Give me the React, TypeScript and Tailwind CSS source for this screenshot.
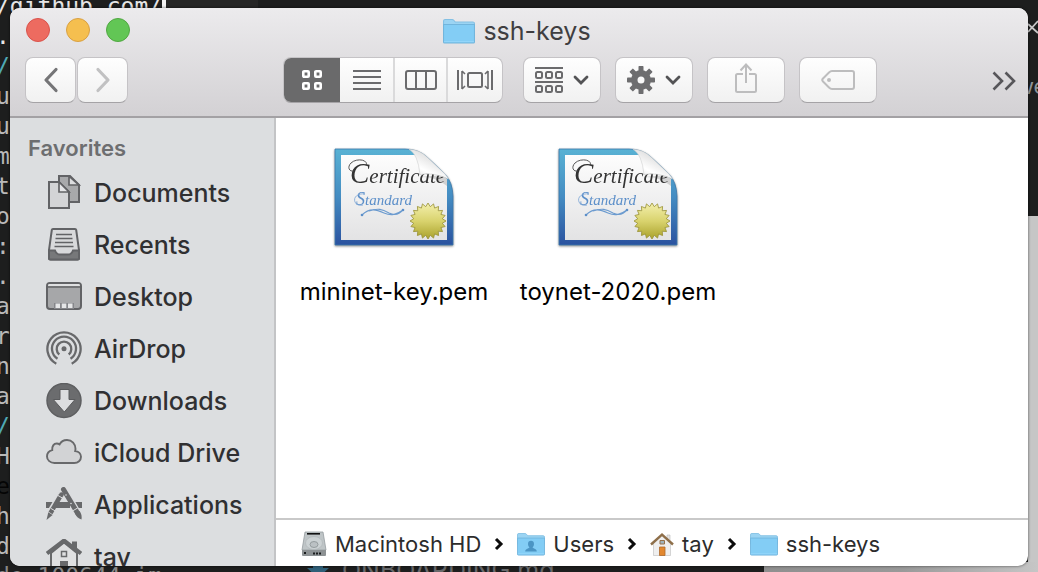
import type { ReactNode } from "react";

const terminalLines = [
  { text: "/github.com/", tone: "text-[#e6e6e6]" },
  { text: ".", tone: "text-[#e6e6e6]" },
  { text: "/", tone: "text-[#4fa9b5]" },
  { text: "u", tone: "text-[#b9b9b9]" },
  { text: "u", tone: "text-[#b9b9b9]" },
  { text: "m", tone: "text-[#b9b9b9]" },
  { text: "t", tone: "text-[#b9b9b9]" },
  { text: "o", tone: "text-[#b9b9b9]" },
  { text: ":", tone: "text-[#b9b9b9]" },
  { text: ".", tone: "text-[#b9b9b9]" },
  { text: "a", tone: "text-[#b9b9b9]" },
  { text: "r", tone: "text-[#b9b9b9]" },
  { text: "n", tone: "text-[#b9b9b9]" },
  { text: "a", tone: "text-[#b9b9b9]" },
  { text: "/", tone: "text-[#4fa9b5]" },
  { text: "H", tone: "text-[#b9b9b9]" },
  { text: "e", tone: "text-[#050505]" },
  { text: "h", tone: "text-[#b9b9b9]" },
  { text: "d", tone: "text-[#b9b9b9]" },
  { text: "de 100644 im", tone: "text-[#8a8a8a]" },
];

function Backdrop() {
  return (
    <div aria-hidden="true" className="absolute inset-0 overflow-hidden bg-[#1d1e1e]">
      <div className="absolute top-0 left-[166px] h-2 w-[92px] bg-[#262626]" />
      <div className="absolute top-0 left-[162px] h-2 w-1 bg-[#f2f2f2]" />
      <div className="absolute right-0 bottom-0 h-[356px] w-[10px] bg-[#c6c6c6]" />
      <div className="absolute right-0 bottom-0 left-[764px] h-[10px] bg-gradient-to-r from-[#8f8f8f] via-[#999999] to-[#c6c6c6]" />
      <div className="absolute -top-[9px] -left-1 font-['DejaVu_Sans_Mono',monospace] text-[23px] leading-[30px]">
        {terminalLines.map((line, i) => (
          <pre key={i} className={`font-[inherit] ${line.tone}`}>
            {line.text}
          </pre>
        ))}
      </div>
      <div className="absolute top-[558px] left-[306px] flex items-start gap-3 text-[25px] leading-6 text-[#68696b]">
        <svg width="24" height="20" viewBox="0 0 24 20" fill="#2f5f78">
          <path d="M7 0h10v10h6L12 20 1 10h6z" />
        </svg>
        <span>ONBOARDING.md</span>
      </div>
      <svg className="absolute top-5 right-0" width="10" height="16" viewBox="0 0 10 16" fill="none" stroke="#c8c8c8" strokeWidth="1.8">
        <path d="M0 4l10 9M0 12L10 1" />
      </svg>
      <span className="absolute top-[74px] left-[1016px] text-[22px] leading-6 text-[#8e9499]">we</span>
    </div>
  );
}

function Folder({ className, person }: { className: string; person?: boolean }) {
  return (
    <svg className={className} viewBox="0 0 30 25" preserveAspectRatio="none">
      <path d="M.5 2q0-1.500 1.500-1.500h6.500q1 0 1.600.8L11.500 3H28q1.500 0 1.500 1.500V12H.5z" fill="#9bd4f3" stroke="#83c0e4" />
      <path d="M.5 5.500h29V23q0 1-1 1h-27q-1 0-1-1z" fill="#83cdf5" stroke="#72b5dc" />
      <path d="M1 22.500h28" stroke="#93d6fa" />
      {person && <path d="M15 8.500c2 0 3.200 1.400 3.200 3.400 0 1.600-.7 2.800-1.500 3.500.2 1.500 4.500 1.500 4.500 4.600H8.800c0-3.100 4.300-3.100 4.500-4.600-.8-.7-1.500-1.900-1.500-3.500 0-2 1.200-3.400 3.200-3.400z" fill="#4c95c4" />}
    </svg>
  );
}

function ToolButton({ label, children, className = "", disabled }: { label: string; children: ReactNode; className?: string; disabled?: boolean }) {
  return (
    <button
      type="button"
      aria-label={label}
      disabled={disabled}
      className={`flex h-[46px] items-center justify-center rounded-lg border border-[#c5c3c6] border-b-[#a5a3a6] bg-gradient-to-b from-[#fefefe] to-[#f1f1f1] ${className}`}
    >
      {children}
    </button>
  );
}

function Caret() {
  return (
    <svg width="16" height="10" viewBox="0 0 16 10" fill="none" stroke="#535355" strokeWidth="2.800" strokeLinecap="round">
      <path d="M2 2l6 6 6-6" />
    </svg>
  );
}

function Gear() {
  return (
    <svg width="28" height="28" viewBox="0 0 28 28">
      <g fill="#6d6d6f">
        {[0, 45, 90, 135].map((a) => (
          <rect key={a} x="11.500" y="0" width="5" height="28" rx=".8" transform={`rotate(${a} 14 14)`} />
        ))}
        <circle cx="14" cy="14" r="10" />
      </g>
      <circle cx="14" cy="14" r="3.500" fill="#f8f8f8" />
    </svg>
  );
}

const viewModes = [
  {
    label: "Icon view",
    width: "w-14",
    icon: (
      <svg width="22" height="22" viewBox="0 0 22 22" fill="none" stroke="#fff" strokeWidth="2.600">
        <rect x="2.300" y="2.300" width="5.400" height="5.400" rx=".8" />
        <rect x="14.300" y="2.300" width="5.400" height="5.400" rx=".8" />
        <rect x="2.300" y="14.300" width="5.400" height="5.400" rx=".8" />
        <rect x="14.300" y="14.300" width="5.400" height="5.400" rx=".8" />
      </svg>
    ),
  },
  {
    label: "List view",
    width: "w-[53px]",
    icon: (
      <svg width="28" height="20" viewBox="0 0 28 20" stroke="#6b6b6d" strokeWidth="2">
        <path d="M0 1h28M0 7h28M0 13h28M0 19h28" />
      </svg>
    ),
  },
  {
    label: "Column view",
    width: "w-[53px]",
    icon: (
      <svg width="32" height="20" viewBox="0 0 32 20" fill="none" stroke="#6b6b6d" strokeWidth="2">
        <rect x="1" y="1" width="30" height="18" rx="2" />
        <path d="M11 1v18M21 1v18" />
      </svg>
    ),
  },
  {
    label: "Gallery view",
    width: "w-14",
    icon: (
      <svg width="36" height="20" viewBox="0 0 36 20" fill="none" stroke="#6b6b6d" strokeWidth="2">
        <path d="M1 0v20M35 0v20" />
        <path d="M5 1v18M31 1v18M5 1l3 3M5 19l3-3M31 1l-3 3M31 19l-3-3" strokeWidth="1.600" />
        <rect x="11" y="3" width="14" height="14" rx="1.500" />
      </svg>
    ),
  },
];

function Toolbar() {
  return (
    <header className="h-[110px] shrink-0 border-b-2 border-[#a3a1a4] bg-gradient-to-b from-[#ecebed] to-[#d3d1d4]">
      <div className="grid h-11 grid-cols-[1fr_auto_1fr] items-center">
        <div className="flex gap-4 pl-4">
          <button type="button" aria-label="Close" className="size-6 rounded-full border border-[#d9534c] bg-[#ed6b60]" />
          <button type="button" aria-label="Minimize" className="size-6 rounded-full border border-[#d8a044] bg-[#f5bf4f]" />
          <button type="button" aria-label="Zoom" className="size-6 rounded-full border border-[#51a742] bg-[#62c655]" />
        </div>
        <h1 className="flex items-center gap-2 pt-0.5 pr-1 text-[25px] leading-8 text-[#3f3e41]">
          <Folder className="h-[25px] w-8" />
          ssh-keys
        </h1>
      </div>
      <div className="mt-[5px] flex items-center pr-3 pl-[15px]">
        <div className="flex gap-px">
          <ToolButton label="Back" className="w-[51px]">
            <svg width="16" height="26" viewBox="0 0 16 26" fill="none" stroke="#757577" strokeWidth="3.200" strokeLinecap="round" strokeLinejoin="round">
              <path d="M13 2.500L3 13l10 10.500" />
            </svg>
          </ToolButton>
          <ToolButton label="Forward" className="w-[51px]" disabled>
            <svg width="16" height="26" viewBox="0 0 16 26" fill="none" stroke="#c1c1c2" strokeWidth="3.200" strokeLinecap="round" strokeLinejoin="round">
              <path d="M3 2.500L13 13 3 23.500" />
            </svg>
          </ToolButton>
        </div>
        <div className="ml-[155px] flex h-[46px] overflow-hidden rounded-lg border border-[#c5c3c6] border-b-[#a5a3a6] bg-gradient-to-b from-[#fefefe] to-[#f1f1f1]">
          {viewModes.map((mode, i) => (
            <button
              key={mode.label}
              type="button"
              aria-label={mode.label}
              aria-pressed={i === 0}
              className={`flex items-center justify-center ${mode.width} ${i === 0 ? "bg-[#6a6a6b]" : ""} ${i > 1 ? "border-l-2 border-[#dadadb]" : ""}`}
            >
              {mode.icon}
            </button>
          ))}
        </div>
        <div className="ml-5 flex gap-[14px]">
          <ToolButton label="Group items" className="w-[78px] gap-[10px]">
            <svg width="28" height="26" viewBox="0 0 28 26" fill="none" stroke="#6b6b6d" strokeWidth="2">
              <path d="M0 1h28M0 15h28" />
              {[1, 11, 21].map((x) => (
                <g key={x}>
                  <rect x={x} y="5" width="6" height="6" rx="1.500" />
                  <rect x={x} y="19" width="6" height="6" rx="1.500" />
                </g>
              ))}
            </svg>
            <Caret />
          </ToolButton>
          <ToolButton label="Actions" className="w-[78px] gap-[10px]">
            <Gear />
            <Caret />
          </ToolButton>
          <ToolButton label="Share" className="w-[78px] pb-1" disabled>
            <svg width="22" height="30" viewBox="0 0 22 30" fill="none" stroke="#bdbdbe" strokeWidth="2">
              <path d="M8 11H2.500Q1 11 1 12.500v15Q1 29 2.500 29h17q1.500 0 1.500-1.500v-15Q21 11 19.500 11H14M11 20V2M5.500 7.500L11 1.500l5.500 6" />
            </svg>
          </ToolButton>
          <ToolButton label="Edit tags" className="w-[78px]" disabled>
            <svg width="34" height="20" viewBox="0 0 34 20" fill="none" stroke="#bdbdbe" strokeWidth="2">
              <path d="M11 1h20q2 0 2 2v14q0 2-2 2H11Q9.500 19 8 17.500l-6-6q-1.500-1.500 0-3l6-6Q9.500 1 11 1z" />
              <circle cx="8" cy="10" r="2" fill="#bdbdbe" stroke="none" />
            </svg>
          </ToolButton>
        </div>
        <button type="button" aria-label="More toolbar items" className="ml-auto pt-0.5">
          <svg width="24" height="20" viewBox="0 0 24 20" fill="none" stroke="#57565a" strokeWidth="2.600">
            <path d="M1.500 1.500L10 10l-8.500 8.500M13.500 1.500L22 10l-8.500 8.500" />
          </svg>
        </button>
      </div>
    </header>
  );
}

const favorites = [
  {
    name: "Documents",
    icon: (
      <g stroke="#626366" strokeWidth="2" strokeLinejoin="miter">
        <path d="M13 1h11l9 9v17H13z" fill="#a8a9ab" />
        <path d="M23 1v9h10z" fill="#dcdddf" strokeWidth="1.700" />
        <path d="M3 7h10l10 10v16H3z" fill="#d3d4d6" />
        <path d="M13 7v10h10z" fill="#e4e5e7" strokeWidth="1.700" />
      </g>
    ),
  },
  {
    name: "Recents",
    icon: (
      <g stroke="#626366" strokeWidth="2">
        <path d="M7 2h22q1 0 1.200 1L33 23v8q0 1.500-1.500 1.500h-27Q3 32.500 3 31v-8L5.800 3Q6 2 7 2z" fill="#d8d9db" />
        <path d="M3 23.500h6q1.500 4 5 4h8q3.500 0 5-4h6V31q0 1.500-1.500 1.500h-27Q3 32.500 3 31z" fill="#77787a" />
        <path d="M10 7.500h16M9.500 11.500h17M9 15.500h18M8.500 19.500h19" strokeWidth="1.700" />
      </g>
    ),
  },
  {
    name: "Desktop",
    icon: (
      <g>
        <rect x="1" y="4" width="34" height="26" rx="3" fill="#a6a7a9" stroke="#626366" strokeWidth="2" />
        <path d="M3 5h30q1 0 1 2H2q0-2 1-2z" fill="#dfe0e1" />
        <path d="M1 8h34" stroke="#626366" strokeWidth="1.600" />
        <path d="M8 24h20v6H8z" fill="#85868a" />
        <path d="M9.500 24.500h4.500v4.500H9.500zM15.800 24.500h4.500v4.500h-4.500zM22 24.500h4.500v4.500H22z" fill="#e5e6e7" />
      </g>
    ),
  },
  {
    name: "AirDrop",
    icon: (
      <g fill="none" stroke="#68696b" strokeWidth="2.300">
        <path d="M10.300 32.700a16.600 16.600 0 1 1 15.400 0" />
        <path d="M11.500 27.800a12 12 0 1 1 13 0" />
        <path d="M13.300 23.500a7.300 7.300 0 1 1 9.400 0" />
        <circle cx="18" cy="17.800" r="2.500" fill="#68696b" stroke="none" />
      </g>
    ),
  },
  {
    name: "Downloads",
    icon: (
      <g>
        <circle cx="18" cy="17.500" r="17" fill="#6b6c6e" stroke="#5e5f61" strokeWidth="1.500" />
        <path d="M14 6.500h9v10h6L18.300 29 7.300 16.500H14z" fill="#dcdddf" stroke="#5a5b5d" />
      </g>
    ),
  },
  {
    name: "iCloud Drive",
    icon: (
      <path d="M8.500 28C4.300 28 1 25.200 1 21.500c0-3.200 2-5.500 5.200-6.300-.3-4 1.500-6.700 4.600-6.700 1.200 0 2 .3 2.800.9C15 6.500 17.700 5 21 5c5 0 8.500 3.900 8.500 8.800 0 .8-.1 1.500-.3 2.200 3.400.3 5.800 2.700 5.800 5.800 0 3.500-2.900 6.200-6.800 6.200z" fill="#d2d3d5" stroke="#68696b" strokeWidth="1.900" />
    ),
  },
  {
    name: "Applications",
    icon: (
      <g>
        <path d="M0 15h36v6H0z" fill="#68696b" />
        <path d="M3.500 28L17.500 4" stroke="#dcdddf" strokeWidth="8" />
        <path d="M18 3l13 23" stroke="#dcdddf" strokeWidth="8" />
        <path d="M12 15h12v6H9z" fill="#68696b" />
        <path d="M4.500 26L15 8" stroke="#68696b" strokeWidth="4.500" />
        <circle cx="15.500" cy="7.500" r="2.300" fill="#68696b" />
        <path d="M2.300 25.300l4.300 2.600L.5 33z" fill="#68696b" />
        <path d="M17.500 2.500L31.500 26" stroke="#68696b" strokeWidth="5" strokeLinecap="round" />
        <path d="M29 26.500l4.500-2.600c2 3 2.500 5 2 8.600-3.500-1-5.200-3-6.500-6z" fill="#68696b" />
        <path d="M12 8.500l4.500 2.600M26.800 23.800l5-2.900M5 21.500l4.200 2.400" stroke="#dcdddf" strokeWidth="1" />
        <circle cx="20" cy="8" r=".8" fill="#dcdddf" />
        <circle cx="25" cy="16.500" r=".8" fill="#dcdddf" />
      </g>
    ),
  },
  {
    name: "tay",
    icon: (
      <g>
        <path d="M26 2.500h5V14l-5-4z" fill="#68696b" />
        <path d="M5 14L18 3.500 31 14v22H5z" fill="#dfe0e1" stroke="#68696b" strokeWidth="2" />
        <path d="M1 14.500L18 1.500l17 13" fill="none" stroke="#68696b" strokeWidth="4" />
        <path d="M15.500 12.500h5v5h-5z" fill="none" stroke="#68696b" strokeWidth="1.500" />
        <path d="M14 22h8v14h-8z" fill="#68696b" />
      </g>
    ),
  },
];

function Sidebar() {
  return (
    <nav aria-label="Favorites" className="w-[266px] shrink-0 overflow-hidden border-r-2 border-[#c3c4c6] bg-[#dcdee0] pt-3">
      <h2 className="pl-[18px] text-[22px] leading-[37px] font-semibold text-[#6d6e70]">Favorites</h2>
      <ul>
        {favorites.map((item) => (
          <li key={item.name}>
            <a href="#" className="flex h-[52px] items-center gap-3 pl-9 text-[25px] leading-8 font-medium text-[#303032]">
              <svg width="36" height="36" viewBox="0 0 36 36" className="shrink-0">
                {item.icon}
              </svg>
              {item.name}
            </a>
          </li>
        ))}
      </ul>
    </nav>
  );
}

const sealPoints = Array.from({ length: 40 }, (_, i) => {
  const r = i % 2 ? 14.5 : 18;
  const a = (i * Math.PI) / 20;
  return `${94 + r * Math.sin(a)},${73 - r * Math.cos(a)}`;
}).join(" ");

function Certificate({ id }: { id: string }) {
  return (
    <svg width="120" height="102" viewBox="0 0 120 102" className="drop-shadow-[0_1px_1px_rgba(0,0,0,0.45)]">
      <defs>
        <linearGradient id={`${id}-frame`} x2="0" y2="1">
          <stop stopColor="#59b2d4" />
          <stop offset=".5" stopColor="#448cc2" />
          <stop offset="1" stopColor="#2a529f" />
        </linearGradient>
        <linearGradient id={`${id}-paper`} x2="0" y2="1">
          <stop stopColor="#fdfdfd" />
          <stop offset="1" stopColor="#e3e3e4" />
        </linearGradient>
        <linearGradient id={`${id}-seal`} x2="0" y2="1">
          <stop stopColor="#f3efad" />
          <stop offset=".5" stopColor="#d9d36e" />
          <stop offset="1" stopColor="#aaa22c" />
        </linearGradient>
        <linearGradient id={`${id}-curl`} x1=".2" y1=".9" x2=".6" y2=".35">
          <stop stopColor="#e9e9e9" />
          <stop offset=".4" stopColor="#ffffff" />
          <stop offset="1" stopColor="#e4e4e4" />
        </linearGradient>
      </defs>
      <path d="M1 1h70q13 0 22 8l18 17q7.500 8 8 22v49H1z" fill={`url(#${id}-frame)`} stroke="#3b79ac" strokeWidth=".8" />
      <path d="M7 7h77l29 24v61H7z" fill={`url(#${id}-paper)`} />
      <text y="35" fontFamily="Liberation Serif, serif" fontStyle="italic" fill="#333">
        <tspan x="16" fontSize="29">C</tspan>
        <tspan fontSize="21">ertificate</tspan>
      </text>
      <path d="M32 18C35 11 22 10 17 15c-4 4-2 9 3 8" fill="none" stroke="#444" strokeWidth=".9" />
      <text y="57" fontFamily="Liberation Serif, serif" fontStyle="italic" fill="#5c8fc9">
        <tspan x="22" fontSize="18">S</tspan>
        <tspan fontSize="15">tandard</tspan>
      </text>
      <path d="M31 46c-7-1-12 3-10 8 1 3 5 4 8 3" fill="none" stroke="#7ba5d5" strokeWidth=".8" />
      <path d="M28 67c8-8 15-5 22-2s12 2 19-3M35 63c9-3 13-2 20 2 6 3 10 2 14-3" fill="none" stroke="#6c9bcf" strokeWidth="1.100" />
      <circle cx="28" cy="67" r="1.300" fill="#5c8fc9" />
      <circle cx="69" cy="62" r="1.300" fill="#5c8fc9" />
      <path d="M85 29q16-1 28 9V31l-3-4z" fill="#000" opacity=".14" />
      <path d="M75 1.200q9 5 11 25.300 14-2.500 28.500 4.500-1.500-2.500-3.500-5L93 9Q86 2 75 1.200z" fill={`url(#${id}-curl)`} stroke="#cdcecf" strokeWidth=".6" />
      <polygon points={sealPoints} fill={`url(#${id}-seal)`} stroke="#989134" strokeWidth=".8" />
    </svg>
  );
}

function Separator() {
  return (
    <svg width="10" height="14" viewBox="0 0 10 14" fill="none" stroke="#0c0c0c" strokeWidth="3" aria-hidden="true">
      <path d="M2 2l5 5-5 5" />
    </svg>
  );
}

function DriveIcon() {
  return (
    <svg width="26" height="26" viewBox="0 0 26 26">
      <path d="M4 1h18l3 18H1z" fill="#bfc5c7" stroke="#969c9f" strokeWidth=".8" />
      <path d="M1 19h24v5q0 1-1 1H2q-1 0-1-1z" fill="#8d9294" />
      <path d="M6 2.800h13" stroke="#111" strokeWidth="1.600" />
      <ellipse cx="13" cy="12" rx="8.500" ry="6.500" fill="#ccd2d4" stroke="#b0b6b9" strokeWidth=".7" />
      <ellipse cx="13" cy="13.500" rx="4" ry="3" fill="#bbc1c4" stroke="#90979a" strokeWidth=".9" />
      <path d="M3 22h2M12 22.500h2M15 22.500h2M18 22.500h2" stroke="#1b1d1e" strokeWidth="2.200" />
    </svg>
  );
}

function HomeIcon() {
  return (
    <svg width="24" height="26" viewBox="0 0 24 26">
      <path d="M17 4h3v8h-3z" fill="#e6e6e6" stroke="#bbb" strokeWidth=".6" />
      <path d="M3.500 12L12 4l8.500 8v12.500h-17z" fill="#efefef" stroke="#c4c4c4" strokeWidth=".7" />
      <path d="M1 13.500L12 3.500l11 10" fill="none" stroke="#8e6f4a" strokeWidth="2.400" />
      <path d="M10 9.500h4.500v3.500H10z" fill="#9fb4be" stroke="#97714a" />
      <path d="M9.500 16h5.500v8.500H9.500z" fill="#e2882f" stroke="#ad6a2c" strokeWidth=".8" />
    </svg>
  );
}

const files = ["mininet-key.pem", "toynet-2020.pem"];

const path = [
  { name: "Macintosh HD", icon: <DriveIcon /> },
  { name: "Users", icon: <Folder className="h-[23px] w-7" person /> },
  { name: "tay", icon: <HomeIcon /> },
  { name: "ssh-keys", icon: <Folder className="h-[23px] w-7" /> },
];

export default function App() {
  return (
    <div className="relative flex h-screen overflow-hidden px-[10px] pt-2 pb-[6px] font-[Inter,'Liberation_Sans',sans-serif]">
      <Backdrop />
      <div className="relative flex min-w-0 flex-1 flex-col overflow-hidden rounded-[10px] bg-white shadow-[0_0_3px_rgba(0,0,0,0.6)]">
        <Toolbar />
        <div className="flex min-h-0 flex-1">
          <Sidebar />
          <main className="flex min-w-0 flex-1 flex-col">
            <ul className="flex flex-1 flex-wrap content-start pt-[30px] pl-[6px]">
              {files.map((file, i) => (
                <li key={file} className="flex w-56 flex-col items-center">
                  <Certificate id={`certificate-${i}`} />
                  <span className="mt-7 text-[24px] leading-7 text-black">{file}</span>
                </li>
              ))}
            </ul>
            <nav aria-label="Path" className="flex h-12 shrink-0 items-center border-t-2 border-[#c9c9c9] pt-0.5 pl-[25px]">
              <ol className="flex items-center gap-[13px]">
                {path.map((part, i) => (
                  <li key={part.name} className="flex items-center gap-[13px]">
                    {i > 0 && <Separator />}
                    <a href="#" className="flex items-center gap-2 text-[22px] leading-7 text-[#2c2c2c]">
                      {part.icon}
                      {part.name}
                    </a>
                  </li>
                ))}
              </ol>
            </nav>
          </main>
        </div>
      </div>
    </div>
  );
}
